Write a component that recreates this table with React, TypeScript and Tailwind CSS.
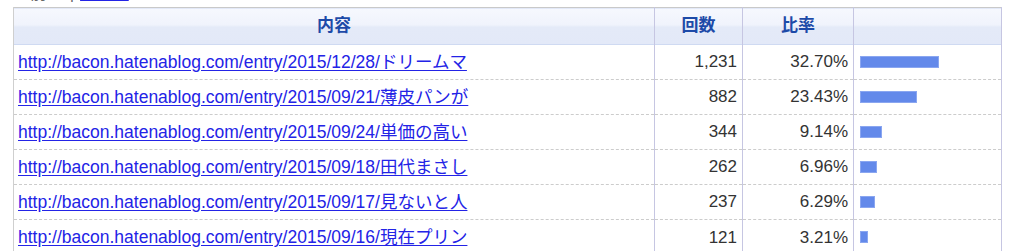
import clsx from "clsx";

const rows = [
  { url: "http://bacon.hatenablog.com/entry/2015/12/28/ドリームマ", count: "1,231", pct: 32.7 },
  { url: "http://bacon.hatenablog.com/entry/2015/09/21/薄皮パンが", count: "882", pct: 23.43 },
  { url: "http://bacon.hatenablog.com/entry/2015/09/24/単価の高い", count: "344", pct: 9.14 },
  { url: "http://bacon.hatenablog.com/entry/2015/09/18/田代まさし", count: "262", pct: 6.96 },
  { url: "http://bacon.hatenablog.com/entry/2015/09/17/見ないと人", count: "237", pct: 6.29 },
  { url: "http://bacon.hatenablog.com/entry/2015/09/16/現在プリン", count: "121", pct: 3.21 },
];

const font = "font-['Liberation_Sans','Noto_Sans_CJK_JP',sans-serif]";

export default function App() {
  return (
    <div className={clsx("w-[1024px] h-[251px] overflow-hidden bg-white", font)}>
      {/* pager, clipped at the top */}
      <div className="h-[7px] overflow-hidden pl-[15px]">
        <div className="-mt-[16px] flex items-end gap-[6px] text-[17px] leading-[20px]">
          <span className="text-[#666]">&lt; 前へ</span>
          <span className="text-[#666]">|</span>
          <a className="text-[#2323e6] underline">次へ &gt;</a>
        </div>
      </div>

      <div className="pl-[13px]">
        <table className="w-[989px] table-fixed border-collapse text-[17px]">
          <colgroup>
            <col className="w-[641px]" />
            <col className="w-[88px]" />
            <col className="w-[111px]" />
            <col />
          </colgroup>
          <thead>
            <tr className="h-[37px] bg-[linear-gradient(#f6f8fe_0%,#f0f3fc_45%,#e4eaf8_52%,#e3e9f8_100%)] border-t border-t-[#c9c9c9] border-b border-b-[#cfdaf2]">
              <th className="border-l border-l-[#cfcfcf] border-r border-r-[#c6c6e2] font-bold text-[#1d4aa8] text-center">内容</th>
              <th className="border-r border-r-[#c6c6e2] font-bold text-[#1d4aa8] text-center">回数</th>
              <th className="border-r border-r-[#c6c6e2] font-bold text-[#1d4aa8] text-center">比率</th>
              <th className="border-r border-r-[#c6c6e2]"></th>
            </tr>
          </thead>
          <tbody>
            {rows.map((r, i) => (
              <tr
                key={r.url}
                className={clsx("h-[35px]", i < rows.length - 1 && "border-b border-dashed border-b-[#cccccc]")}
              >
                <td className="border-l border-l-[#cfcfcf] border-r border-r-[#c6c6e2] pl-[4px] whitespace-nowrap overflow-hidden text-[17.5px]">
                  <a className="text-[#2323e6] underline underline-offset-[2px]">{r.url}</a>
                </td>
                <td className="border-r border-r-[#c6c6e2] text-right pr-[5px] text-[#333]">{r.count}</td>
                <td className="border-r border-r-[#c6c6e2] text-right pr-[5px] text-[#333]">{r.pct.toFixed(2)}%</td>
                <td className="border-r border-r-[#c6c6e2] pl-[6px]">
                  <div
                    className="h-[12px] bg-[#6389ea] border border-[#8aa6f0]"
                    style={{ width: Math.round(r.pct * 2.42) }}
                  />
                </td>
              </tr>
            ))}
          </tbody>
        </table>
      </div>
    </div>
  );
}
